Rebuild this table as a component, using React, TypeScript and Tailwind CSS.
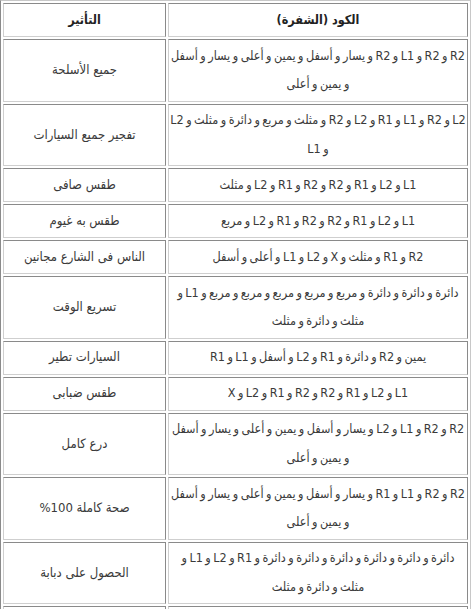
import React from "react";

type Row = { code: string[]; effect: string };

const rows: Row[] = [
  {
    code: ["R2 و R2 و L1 و R2 و يسار و أسفل و يمين و أعلى و يسار و أسفل", "و يمين و أعلى"],
    effect: "جميع الأسلحة",
  },
  {
    code: ["L2 و R2 و L1 و R1 و L2 و R2 و مثلث و مربع و دائرة و مثلث و L2", "و L1"],
    effect: "تفجير جميع السيارات",
  },
  { code: ["L1 و L2 و R1 و R2 و R2 و R1 و L2 و مثلث"], effect: "طقس صافى" },
  { code: ["L1 و L2 و R1 و R2 و R2 و R1 و L2 و مربع"], effect: "طقس به غيوم" },
  { code: ["R2 و R1 و مثلث و X و L2 و L1 و أعلى و أسفل"], effect: "الناس فى الشارع مجانين" },
  {
    code: ["دائرة و دائرة و دائرة و مربع و مربع و مربع و مربع و مربع و L1 و", "مثلث و دائرة و مثلث"],
    effect: "تسريع الوقت",
  },
  { code: ["يمين و R2 و دائرة و R1 و L2 و أسفل و L1 و R1"], effect: "السيارات تطير" },
  { code: ["L1 و L2 و R1 و R2 و R2 و R1 و L2 و X"], effect: "طقس ضبابى" },
  {
    code: ["R2 و R2 و L1 و L2 و يسار و أسفل و يمين و أعلى و يسار و أسفل", "و يمين و أعلى"],
    effect: "درع كامل",
  },
  {
    code: ["R2 و R2 و L1 و R1 و يسار و أسفل و يمين و أعلى و يسار و أسفل", "و يمين و أعلى"],
    effect: "صحة كاملة 100%",
  },
  {
    code: ["دائرة و دائرة و دائرة و دائرة و دائرة و دائرة و R1 و L2 و L1 و", "مثلث و دائرة و مثلث"],
    effect: "الحصول على دبابة",
  },
  { code: ["L1 و L2 و R1 و R2 و R2 و R1 و L2 و دائرة"], effect: "طقس ممطر" },
];

const cell =
  "border border-t-[#8a8a8a] border-r-[#8a8a8a] border-b-[#cfcfcf] border-l-[#cfcfcf] px-px py-[1.75px] text-center align-middle leading-[28.5px] overflow-hidden";

export default function App() {
  return (
    <div
      className="bg-white w-[474px] h-[609px] overflow-hidden text-[#3a3a3a] font-stretch-condensed"
      style={{ fontFamily: '"DejaVu Sans", sans-serif' }}
    >
      <table
        dir="rtl"
        className="table-fixed w-[471px] border-separate border-spacing-[2px] border border-t-[#c8c8c8] border-r-[#c8c8c8] border-b-[#8a8a8a] border-l-[#8a8a8a] text-[13px]"
      >
        <colgroup>
          <col className="w-[300px]" />
          <col />
        </colgroup>
        <thead>
          <tr>
            <th className={cell + " font-bold text-[12.5px] text-[#222]"}>الكود (الشفرة)</th>
            <th className={cell + " font-bold text-[12.5px] text-[#222]"}>التأثير</th>
          </tr>
        </thead>
        <tbody>
          {rows.map((r, i) => (
            <tr key={i}>
              <td className={cell + " whitespace-nowrap text-[12.5px] [word-spacing:-1.1px]"}>
                {r.code.map((line, j) => (
                  <div key={j}>{line}</div>
                ))}
              </td>
              <td className={cell}>{r.effect}</td>
            </tr>
          ))}
        </tbody>
      </table>
    </div>
  );
}
